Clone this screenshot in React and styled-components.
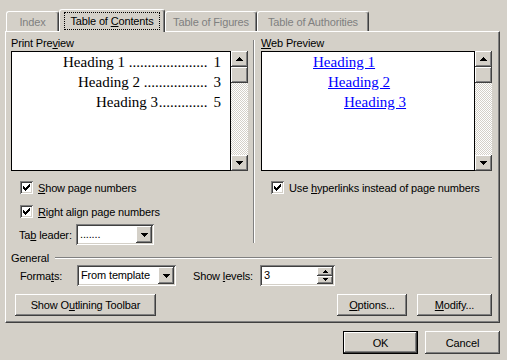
import styled, { createGlobalStyle, css } from "styled-components";

const face = "#d4d0c8";

const GlobalStyle = createGlobalStyle`
  html, body { margin: 0; padding: 0; background: ${face}; }
  body {
    font-family: "Liberation Sans", Arial, sans-serif;
    font-size: 11px;
    letter-spacing: -0.15px;
    color: #000;
  }
  * { box-sizing: border-box; }
`;

const raised = css`
  box-shadow: inset -1px -1px #404040, inset 1px 1px #fff,
    inset -2px -2px #808080, inset 2px 2px ${face};
`;
const sunken = css`
  box-shadow: inset 1px 1px #808080, inset -1px -1px #fff,
    inset 2px 2px #404040, inset -2px -2px ${face};
`;

const Dialog = styled.div`
  width: 507px;
  height: 360px;
  padding: 9px 7px 0 5px;
  display: flex;
  flex-direction: column;
  background: ${face};
`;

const TabRow = styled.div`
  display: flex;
  align-items: flex-end;
  height: 22px;
  padding-left: 1px;
`;

const Tab = styled.div`
  width: ${(p) => p.$w}px;
  height: ${(p) => (p.$active ? 23 : 20)}px;
  margin-bottom: ${(p) => (p.$active ? -1 : 0)}px;
  display: flex;
  justify-content: center;
  align-items: flex-start;
  padding-top: ${(p) => (p.$active ? 2 : 4)}px;
  border-top: 1px solid #fff;
  border-left: 1px solid #fff;
  border-right: 1px solid #404040;
  border-radius: 3px 3px 0 0;
  box-shadow: inset -1px 0 #808080;
  background: ${face};
  color: ${(p) => (p.$active ? "#000" : "#808080")};
  white-space: nowrap;
  position: ${(p) => (p.$active ? "relative" : "static")};
  z-index: ${(p) => (p.$active ? 2 : "auto")};
`;

const TabFocus = styled.span`
  display: inline-block;
  border: 1px dotted #000;
  padding: 2px 5px 1px;
  line-height: 13px;
`;

const Panel = styled.div`
  width: 495px;
  height: 292px;
  border-top: 1px solid #fff;
  border-left: 1px solid #fff;
  border-right: 1px solid #404040;
  border-bottom: 1px solid #404040;
  box-shadow: inset -1px -1px #808080;
  padding: 5px 7px 0 5px;
  display: flex;
  flex-direction: column;
`;

const TopSection = styled.div`
  display: flex;
`;

const Column = styled.div`
  width: ${(p) => p.$w}px;
  display: flex;
  flex-direction: column;
`;

const VRule = styled.div`
  width: 2px;
  margin: 3px 6px 2px 5px;
  border-left: 1px solid #808080;
  border-right: 1px solid #fff;
`;

const GroupLabel = styled.div`
  line-height: 13px;
  height: 13px;
  margin-bottom: 1px;
`;

const PreviewWrap = styled.div`
  display: flex;
  height: 120px;
`;

const PreviewBox = styled.div`
  flex: 1;
  background: #fff;
  border: 1px solid #000;
  font-family: "Liberation Serif", "Times New Roman", serif;
  font-size: 15px;
  line-height: 20px;
  letter-spacing: 0;
  padding: 0 9px 0 0;
  overflow: hidden;
`;

const PrintLine = styled.div`
  display: flex;
  padding-left: ${(p) => p.$indent}px;
  white-space: nowrap;
`;

const Leader = styled.span`
  flex: 1;
  min-width: 0;
  overflow: hidden;
  text-align: right;
  margin: 0 6px 0 0;
`;

const WebLine = styled.div`
  padding-left: ${(p) => p.$indent}px;
  color: #0000ff;
  text-decoration: underline;
  white-space: nowrap;
`;

const ScrollBar = styled.div`
  width: 17px;
  display: flex;
  flex-direction: column;
`;

const ScrollButton = styled.div`
  height: 16px;
  background: ${face};
  ${raised};
  display: flex;
  align-items: center;
  justify-content: center;
`;

const Track = styled.div`
  flex: 1;
  background: repeating-conic-gradient(#fff 0 25%, ${face} 0 50%) 0 0 / 2px 2px;
`;

const CheckRow = styled.label`
  display: flex;
  align-items: center;
  height: 13px;
  margin-top: ${(p) => p.$mt}px;
  padding-left: ${(p) => p.$indent}px;
  white-space: nowrap;
`;

const CheckBox = styled.span`
  width: 13px;
  height: 13px;
  margin-right: 5px;
  background: #fff;
  ${sunken};
  display: flex;
  align-items: center;
  justify-content: center;
`;

const FieldRow = styled.div`
  display: flex;
  align-items: center;
  margin-top: ${(p) => p.$mt || 0}px;
  padding-left: ${(p) => p.$indent || 0}px;
`;

const FieldLabel = styled.span`
  width: ${(p) => p.$w}px;
  margin-left: ${(p) => p.$ml || 0}px;
  white-space: nowrap;
`;

const Field = styled.div`
  width: ${(p) => p.$w}px;
  height: 21px;
  background: #fff;
  ${sunken};
  padding: 2px;
  display: flex;
  align-items: stretch;
`;

const FieldValue = styled.span`
  flex: 1;
  padding-left: 2px;
  line-height: 17px;
  white-space: nowrap;
  overflow: hidden;
`;

const DropButton = styled.span`
  width: 16px;
  background: ${face};
  ${raised};
  display: flex;
  align-items: center;
  justify-content: center;
`;

const SpinButtons = styled.span`
  width: 16px;
  display: flex;
  flex-direction: column;
`;

const SpinButton = styled.span`
  flex: 1;
  background: ${face};
  ${raised};
  display: flex;
  align-items: center;
  justify-content: center;
`;

const GeneralRow = styled.div`
  display: flex;
  align-items: center;
  height: 13px;
  margin-top: 6px;
`;

const HRule = styled.div`
  flex: 1;
  margin-left: 6px;
  border-top: 1px solid #808080;
  border-bottom: 1px solid #fff;
`;

const ButtonRow = styled.div`
  display: flex;
  justify-content: ${(p) => p.$justify || "space-between"};
  gap: ${(p) => p.$gap || 0}px;
  margin-top: ${(p) => p.$mt}px;
  padding-left: ${(p) => p.$indent || 0}px;
`;

const ButtonGroup = styled.div`
  display: flex;
  gap: 10px;
`;

const Button = styled.button`
  width: ${(p) => p.$w}px;
  height: ${(p) => p.$h || 22}px;
  font: inherit;
  letter-spacing: inherit;
  color: #000;
  background: ${face};
  border: ${(p) => (p.$default ? "1px solid #000" : "none")};
  padding: 0;
  ${raised};
  white-space: nowrap;
`;

const arrowPath = (w, up) => {
  const rows = Math.ceil(w / 2);
  let d = "";
  for (let i = 0; i < rows; i++) {
    const y = up ? rows - 1 - i : i;
    d += `M${i} ${y}h${w - 2 * i}v1h-${w - 2 * i}z`;
  }
  return { d, h: rows };
};

const Arrow = ({ w = 7, up }) => {
  const { d, h } = arrowPath(w, up);
  return (
    <svg width={w} height={h} viewBox={`0 0 ${w} ${h}`} shapeRendering="crispEdges">
      <path d={d} fill="#000" />
    </svg>
  );
};

const Tick = () => (
  <svg width="7" height="7" viewBox="0 0 7 7" shapeRendering="crispEdges">
    <path
      d="M6 0h1v1h-1z M5 1h2v1h-2z M0 2h1v1h-1z M4 2h3v1h-3z M0 3h2v1h-2z M3 3h3v1h-3z M0 4h5v1h-5z M1 5h3v1h-3z M2 6h1v1h-1z"
      fill="#000"
    />
  </svg>
);

const Scroller = () => (
  <ScrollBar>
    <ScrollButton>
      <Arrow up />
    </ScrollButton>
    <ScrollButton />
    <Track />
    <ScrollButton>
      <Arrow />
    </ScrollButton>
  </ScrollBar>
);

const Check = ({ children, indent, mt }) => (
  <CheckRow $indent={indent} $mt={mt}>
    <CheckBox>
      <Tick />
    </CheckBox>
    <span>{children}</span>
  </CheckRow>
);

// dot leaders as they appear in the preview
const tocLines = [
  { text: "Heading 1", page: "1", indent: 51, dots: 21 },
  { text: "Heading 2", page: "3", indent: 66, dots: 17 },
  { text: "Heading 3", page: "5", indent: 84, dots: 13 },
];

const webLines = [
  { text: "Heading 1", indent: 51 },
  { text: "Heading 2", indent: 66 },
  { text: "Heading 3", indent: 82 },
];

export default function App() {
  return (
    <>
      <GlobalStyle />
      <Dialog>
        <TabRow>
          <Tab $w={53}>Index</Tab>
          <Tab $w={106} $active>
            <TabFocus>
              Table of <u>C</u>ontents
            </TabFocus>
          </Tab>
          <Tab $w={92}>Table of Figures</Tab>
          <Tab $w={112}>Table of Authorities</Tab>
        </TabRow>

        <Panel>
          <TopSection>
            <Column $w={237}>
              <GroupLabel>
                Print Pre<u>v</u>iew
              </GroupLabel>
              <PreviewWrap>
                <PreviewBox>
                  {tocLines.map((l) => (
                    <PrintLine key={l.text} $indent={l.indent}>
                      <span>{l.text}</span>
                      <Leader>{".".repeat(l.dots)}</Leader>
                      <span>{l.page}</span>
                    </PrintLine>
                  ))}
                </PreviewBox>
                <Scroller />
              </PreviewWrap>
              <Check indent={9} mt={10}>
                <u>S</u>how page numbers
              </Check>
              <Check indent={9} mt={11}>
                <u>R</u>ight align page numbers
              </Check>
              <FieldRow $mt={6} $indent={8}>
                <FieldLabel $w={57}>
                  Ta<u>b</u> leader:
                </FieldLabel>
                <Field $w={78}>
                  <FieldValue>.......</FieldValue>
                  <DropButton>
                    <Arrow />
                  </DropButton>
                </Field>
              </FieldRow>
            </Column>

            <VRule />

            <Column $w={231}>
              <GroupLabel>
                <u>W</u>eb Preview
              </GroupLabel>
              <PreviewWrap>
                <PreviewBox>
                  {webLines.map((l) => (
                    <WebLine key={l.text} $indent={l.indent}>
                      {l.text}
                    </WebLine>
                  ))}
                </PreviewBox>
                <Scroller />
              </PreviewWrap>
              <Check indent={10} mt={10}>
                Use <u>h</u>yperlinks instead of page numbers
              </Check>
            </Column>
          </TopSection>

          <GeneralRow>
            <span>General</span>
            <HRule />
          </GeneralRow>

          <FieldRow $mt={1} $indent={9}>
            <FieldLabel $w={57}>
              Forma<u>t</u>s:
            </FieldLabel>
            <Field $w={99}>
              <FieldValue>From template</FieldValue>
              <DropButton>
                <Arrow />
              </DropButton>
            </Field>
            <FieldLabel $w={67} $ml={17}>
              Show <u>l</u>evels:
            </FieldLabel>
            <Field $w={75}>
              <FieldValue>3</FieldValue>
              <SpinButtons>
                <SpinButton>
                  <Arrow w={5} up />
                </SpinButton>
                <SpinButton>
                  <Arrow w={5} />
                </SpinButton>
              </SpinButtons>
            </Field>
          </FieldRow>

          <ButtonRow $mt={8} $indent={4}>
            <Button $w={141}>
              Show O<u>u</u>tlining Toolbar
            </Button>
            <ButtonGroup>
              <Button $w={70}>
                <u>O</u>ptions...
              </Button>
              <Button $w={75}>
                <u>M</u>odify...
              </Button>
            </ButtonGroup>
          </ButtonRow>
        </Panel>

        <ButtonRow $mt={8} $justify="flex-end" $gap={7}>
          <Button $w={75} $h={23} $default>
            OK
          </Button>
          <Button $w={75} $h={23}>
            Cancel
          </Button>
        </ButtonRow>
      </Dialog>
    </>
  );
}
